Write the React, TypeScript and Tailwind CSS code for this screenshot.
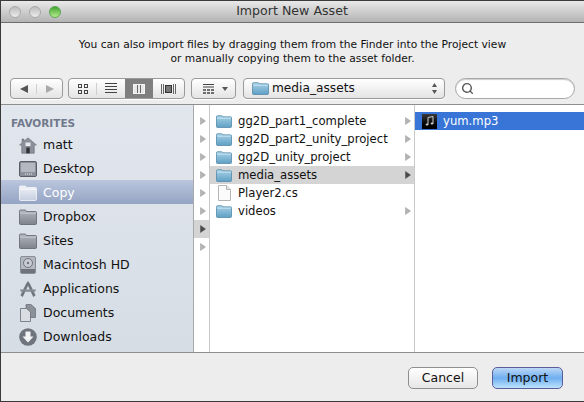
import { Search } from 'lucide-react';

const FONT = "font-['DejaVu_Sans',sans-serif]";

function Arrow({ dark = false }: { dark?: boolean }) {
  return (
    <svg width="6" height="8" viewBox="0 0 6 8" className="shrink-0">
      <path d="M0.5 0.5 L5.5 4 L0.5 7.5 Z" fill={dark ? '#4a4a4a' : '#b4b4b4'} stroke={dark ? '#4a4a4a' : '#989898'} strokeWidth="0.5" />
    </svg>
  );
}

function BlueFolder({ small = false }: { small?: boolean }) {
  return (
    <svg width={small ? 17 : 16} height="13" viewBox="0 0 16 14" preserveAspectRatio="none">
      <defs>
        <linearGradient id="bf" x1="0" y1="0" x2="0" y2="1">
          <stop offset="0" stopColor="#a9d3e8" />
          <stop offset="1" stopColor="#5f9fc4" />
        </linearGradient>
      </defs>
      <path d="M0.5 3 V1.8 Q0.5 0.8 1.5 0.8 H5.5 Q6.5 0.8 7 2 H14.5 Q15.5 2 15.5 3 V12.5 Q15.5 13.5 14.5 13.5 H1.5 Q0.5 13.5 0.5 12.5 Z" fill="url(#bf)" stroke="#4f86a8" strokeWidth="0.8" />
      <path d="M1 3.4 H15" stroke="#d5ecf7" strokeWidth="0.8" />
    </svg>
  );
}

function GrayFolder({ light = false }: { light?: boolean }) {
  const id = light ? 'gfl' : 'gfd';
  return (
    <svg width="18" height="16" viewBox="0 0 18 16">
      <defs>
        <linearGradient id={id} x1="0" y1="0" x2="0" y2="1">
          <stop offset="0" stopColor={light ? '#eef1f6' : '#b4b8c0'} />
          <stop offset="1" stopColor={light ? '#c6cfe0' : '#7d828c'} />
        </linearGradient>
      </defs>
      <path d="M0.5 3.5 V2 Q0.5 1 1.5 1 H6 Q7 1 7.5 2.5 H16.5 Q17.5 2.5 17.5 3.5 V14.5 Q17.5 15.5 16.5 15.5 H1.5 Q0.5 15.5 0.5 14.5 Z" fill={`url(#${id})`} stroke={light ? '#f4f6fa' : '#5f636b'} strokeWidth="0.8" />
      <path d="M1 4.2 H17" stroke={light ? '#ffffff' : '#d0d3d8'} strokeWidth="0.8" />
    </svg>
  );
}

function SideIcon({ name }: { name: string }) {
  if (name === 'matt') {
    return (
      <svg width="18" height="17" viewBox="0 0 18 17">
        <path d="M9 0.8 L17.5 8 H15.3 V16.3 H2.7 V8 H0.5 L3 5.8 V2 H5 V4.2 Z" fill="#8b9099" stroke="#5f636b" strokeWidth="0.5" />
        <rect x="7.3" y="10.5" width="3.4" height="5.8" fill="#2f3237" />
        <rect x="6.5" y="5.5" width="5" height="3.5" fill="#e6e8ec" />
      </svg>
    );
  }
  if (name === 'Desktop') {
    return (
      <svg width="18" height="16" viewBox="0 0 18 16">
        <rect x="0.5" y="0.5" width="17" height="15" rx="1.5" fill="#8b909a" stroke="#5a5e66" />
        <rect x="2" y="2" width="14" height="9" fill="#b4b9c1" />
        <path d="M6 13 h1 M8 13 h1 M10 13 h1 M12 13 h1" stroke="#eceef1" strokeWidth="1.2" />
      </svg>
    );
  }
  if (name === 'Copy') return <GrayFolder light />;
  if (name === 'Dropbox' || name === 'Sites') return <GrayFolder />;
  if (name === 'Macintosh HD') {
    return (
      <svg width="16" height="18" viewBox="0 0 16 18">
        <rect x="0.5" y="0.5" width="15" height="17" rx="1.5" fill="#b4b8bf" stroke="#8a8e96" />
        <circle cx="8" cy="7" r="4.5" fill="#c8ccd2" stroke="#70747c" />
        <circle cx="8" cy="7" r="1.2" fill="#70747c" />
        <rect x="1" y="13" width="14" height="4" fill="#70747c" />
      </svg>
    );
  }
  if (name === 'Applications') {
    return (
      <svg width="19" height="18" viewBox="0 0 19 18">
        <path d="M9.5 0.5 L11.5 3.5 L17.5 15.5 L15 17.5 L9.5 5.5 L4 17.5 L1.5 15.5 L7.5 3.5 Z" fill="#70757e" />
        <path d="M1 9.5 H18 L17 12 H2 Z" fill="#858a93" />
      </svg>
    );
  }
  if (name === 'Documents') {
    return (
      <svg width="16" height="18" viewBox="0 0 16 18">
        <path d="M6 0.5 H11 L15.5 4.5 V13.5 H6 Z" fill="#8c9099" stroke="#686c74" strokeWidth="0.7" />
        <path d="M0.5 4.5 H6.5 L10.5 8 V17.5 H0.5 Z" fill="#dadde2" stroke="#686c74" strokeWidth="0.8" />
      </svg>
    );
  }
  return (
    <svg width="18" height="18" viewBox="0 0 18 18">
      <circle cx="9" cy="9" r="8.8" fill="#6f747d" />
      <path d="M6.5 3.5 H11.5 V8.5 H14.5 L9 14.5 L3.5 8.5 H6.5 Z" fill="#f2f3f5" />
    </svg>
  );
}

const favorites = ['matt', 'Desktop', 'Copy', 'Dropbox', 'Sites', 'Macintosh HD', 'Applications', 'Documents', 'Downloads'];
const files = [
  { name: 'gg2D_part1_complete', folder: true },
  { name: 'gg2D_part2_unity_project', folder: true },
  { name: 'gg2D_unity_project', folder: true },
  { name: 'media_assets', folder: true, active: true },
  { name: 'Player2.cs', folder: false },
  { name: 'videos', folder: true },
];

const group = 'h-[21px] rounded-[4px] border border-[#9a9a9a] bg-gradient-to-b from-white to-[#e4e4e4] flex items-center shadow-[0_1px_0_#fff]';

export default function App() {
  return (
    <div className={`${FONT} w-[584px] h-[402px] flex flex-col overflow-hidden bg-[#ededed] border-l border-b border-t border-[#3a3a3a] text-[12px] text-[#111]`}>
      {/* Title bar */}
      <div className="h-[22px] shrink-0 flex items-center bg-gradient-to-b from-[#e9e9e9] to-[#b4b4b4] border-b border-[#6e6e6e]">
        <div className="flex items-center gap-[8px] pl-[8px]">
          <span className="w-[12px] h-[12px] rounded-full border border-[#a8a8a8] bg-gradient-to-b from-[#bcbcbc] to-[#ececec]" />
          <span className="w-[12px] h-[12px] rounded-full border border-[#a8a8a8] bg-gradient-to-b from-[#bcbcbc] to-[#ececec]" />
          <span className="w-[12px] h-[12px] rounded-full border border-[#5aa550] bg-gradient-to-b from-[#3ea52f] to-[#b5ec8c]" />
        </div>
        <div className="flex-1 text-center text-[12.6px] text-[#333] pr-[61px]">Import New Asset</div>
      </div>

      {/* Message */}
      <div className="h-[44px] shrink-0 pt-[15px] text-center text-[10.7px] leading-[14px] text-[#111]">
        <p>You can also import files by dragging them from the Finder into the Project view</p>
        <p>or manually copying them to the asset folder.</p>
      </div>

      {/* Toolbar */}
      <div className="h-[37px] shrink-0 pl-[9px] pt-[11px] flex items-start">
        <div className={`${group} w-[53px]`}>
          <div className="w-[26px] flex justify-center border-r border-[#cfcfcf]">
            <svg width="10" height="10" viewBox="0 0 10 10"><path d="M9 1 V9 L1 5 Z" fill="#555" /></svg>
          </div>
          <div className="flex-1 flex justify-center">
            <svg width="10" height="10" viewBox="0 0 10 10"><path d="M1 1 V9 L9 5 Z" fill="#aaa" /></svg>
          </div>
        </div>
        <div className={`${group} w-[117px] ml-[5px] overflow-hidden`}>
          <div className="w-[28px] flex justify-center border-r border-[#cfcfcf]">
            <svg width="12" height="12" viewBox="0 0 12 12" fill="none" stroke="#444"><rect x="1.5" y="1.5" width="3" height="3" /><rect x="7.5" y="1.5" width="3" height="3" /><rect x="1.5" y="7.5" width="3" height="3" /><rect x="7.5" y="7.5" width="3" height="3" /></svg>
          </div>
          <div className="w-[28px] flex justify-center">
            <svg width="12" height="11" viewBox="0 0 12 11" stroke="#444"><path d="M0 0.5 H12 M0 3.5 H12 M0 6.5 H12 M0 9.5 H12" /></svg>
          </div>
          <div className="w-[28px] h-full flex items-center justify-center bg-[#7f7f7f]">
            <svg width="12" height="10" viewBox="0 0 12 10"><rect x="0.5" y="0.5" width="11" height="9" fill="#e8e8e8" stroke="#f4f4f4" /><path d="M4.5 1 V9 M7.5 1 V9" stroke="#666" /></svg>
          </div>
          <div className="flex-1 flex justify-center">
            <svg width="15" height="10" viewBox="0 0 15 10"><rect x="4.5" y="1.5" width="6" height="7" fill="#777" stroke="#333" /><path d="M0.5 0 V10 M2.5 0 V10 M12.5 0 V10 M14.5 0 V10" stroke="#666" /></svg>
          </div>
        </div>
        <div className={`${group} w-[45px] ml-[6px] gap-[8px] pl-[11px]`}>
          <svg width="11" height="10" viewBox="0 0 11 10" stroke="#444"><path d="M0 0.5 H11 M0 3 H11" /><path d="M0 6 H3 M4 6 H7 M8 6 H11 M0 9 H3 M4 9 H7 M8 9 H11" strokeWidth="1.4" /></svg>
          <svg width="6" height="4" viewBox="0 0 6 4"><path d="M0 0 H6 L3 4 Z" fill="#555" /></svg>
        </div>
        <div className={`${group} w-[202px] ml-[7px] pl-[8px] pr-[6px] gap-[3px]`}>
          <BlueFolder small />
          <span className="flex-1 text-[12.2px]">media_assets</span>
          <svg width="7" height="11" viewBox="0 0 7 11" fill="#555"><path d="M3.5 0 L6 4 H1 Z M3.5 11 L6 7 H1 Z" /></svg>
        </div>
        <div className="w-[120px] h-[21px] ml-[10px] rounded-full border border-[#a8a8a8] bg-white flex items-center pl-[5px] shadow-[inset_0_1px_1px_#ccc]">
          <Search size={13} strokeWidth={2.6} className="text-[#555]" />
        </div>
      </div>

      {/* Browser */}
      <div className="h-[249px] shrink-0 flex border-t border-[#8e8e8e] border-b">
        <div className="w-[193px] shrink-0 bg-gradient-to-b from-[#e2e6ed] to-[#d6dde5] border-r border-[#a9a9a9]">
          <div className="h-[27px] pt-[11px] pl-[10px] text-[10.5px] leading-[14px] font-bold text-[#707a8c]">FAVORITES</div>
          {favorites.map((f) => {
            const active = f === 'Copy';
            return (
              <div key={f} className={`h-[24px] pt-[2px] flex items-center ${active ? 'bg-gradient-to-b from-[#bac6dd] to-[#95a4c4] text-white' : ''}`}>
                <div className="w-[18px] ml-[18px] flex justify-center"><SideIcon name={f} /></div>
                <span className="ml-[6px] text-[12.5px]">{f}</span>
              </div>
            );
          })}
        </div>

        {/* Parent column sliver */}
        <div className="w-[16px] shrink-0 bg-white border-r border-[#c9c9c9] pt-[7px]">
          {[0, 1, 2, 3, 4, 5, 6, 7].map((i) => (
            <div key={i} className={`h-[18px] flex items-center justify-end pr-[3px] ${i === 6 ? 'bg-[#d4d4d4]' : ''}`}>
              <Arrow dark={i === 6} />
            </div>
          ))}
        </div>

        {/* Project column */}
        <div className="w-[205px] shrink-0 bg-white border-r border-[#c9c9c9] pt-[7px]">
          {files.map((f) => (
            <div key={f.name} className={`h-[18px] flex items-center pl-[6px] pr-[3px] ${f.active ? 'bg-[#d4d4d4]' : ''}`}>
              <div className="w-[16px] flex justify-center">
                {f.folder ? (
                  <BlueFolder />
                ) : (
                  <svg width="13" height="16" viewBox="0 0 13 16"><path d="M0.5 0.5 H8.5 L12.5 4.5 V15.5 H0.5 Z" fill="#fbfbfb" stroke="#b5b5b5" /><path d="M8.5 0.5 V4.5 H12.5" fill="#e4e4e4" stroke="#b5b5b5" /></svg>
                )}
              </div>
              <span className="ml-[6px] pt-[1px] flex-1 text-[11.65px]">{f.name}</span>
              {f.folder && <Arrow dark={f.active} />}
            </div>
          ))}
        </div>

        {/* File column */}
        <div className="flex-1 bg-white pt-[7px]">
          <div className="h-[18px] flex items-center bg-[#3875d7] text-white pl-[7px]">
            <div className="w-[15px] h-[15px] bg-gradient-to-b from-[#3a3a3a] to-black flex items-center justify-center">
              <svg width="9" height="10" viewBox="0 0 9 10"><path d="M3 1.5 L8 0.5 V7.5 M3 1.5 V8.5" stroke="#cfcfcf" fill="none" /><ellipse cx="2" cy="8.5" rx="1.4" ry="1" fill="#cfcfcf" /><ellipse cx="7" cy="7.5" rx="1.4" ry="1" fill="#cfcfcf" /></svg>
            </div>
            <span className="ml-[6px] pt-[1px] text-[11.65px]">yum.mp3</span>
          </div>
        </div>
      </div>

      {/* Footer */}
      <div className="flex-1 flex items-start justify-end pt-[14px] pr-[21px] gap-[14px]">
        <button className="w-[70px] h-[22px] rounded-[5px] border border-[#8f8f8f] bg-gradient-to-b from-white to-[#e6e6e6] text-[12.5px] text-[#111]">Cancel</button>
        <button className="w-[71px] h-[22px] rounded-[5px] border border-[#5a5f9c] bg-gradient-to-b from-[#bcd8f6] via-[#6eaef0] to-[#bde3fb] text-[12.5px] text-[#111]">Import</button>
      </div>
    </div>
  );
}
